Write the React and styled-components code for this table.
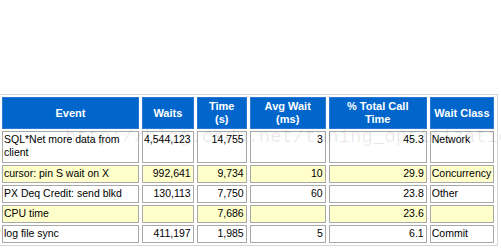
import styled, { createGlobalStyle } from "styled-components";

const GlobalStyle = createGlobalStyle`
  html, body {
    margin: 0;
    padding: 0;
    background: #ffffff;
    overflow: hidden;
  }
`;

const Page = styled.div`
  position: relative;
  width: 501px;
  height: 249px;
  padding-top: 94px;
  box-sizing: border-box;
  font-family: "Liberation Sans", Arial, sans-serif;
`;

const Table = styled.table`
  table-layout: fixed;
  border-collapse: separate;
  border-spacing: 3px 2px;
  border: 1px solid #d6d6d6;
  margin-left: -2px;
`;

const Th = styled.th`
  box-sizing: border-box;
  width: ${(p) => p.$w}px;
  height: 32px;
  padding: 1px 3px;
  background: #0066cc;
  border: 1px solid #2a78d2;
  color: #ffffff;
  font-size: 11px;
  font-weight: bold;
  line-height: 13px;
  text-align: center;
  vertical-align: middle;
`;

const Td = styled.td`
  box-sizing: border-box;
  height: ${(p) => (p.$tall ? 32 : 18)}px;
  padding: 1px 2px 2px 1px;
  background: ${(p) => (p.$alt ? "#ffffcc" : "#ffffff")};
  border: 1px solid #a8a8a8;
  color: #000000;
  font-size: 10.5px;
  line-height: 13px;
  text-align: ${(p) => (p.$num ? "right" : "left")};
  vertical-align: top;
  overflow: hidden;
`;

const Watermark = styled.div`
  position: absolute;
  left: 65px;
  top: 127px;
  font-family: "Liberation Mono", "Courier New", monospace;
  font-size: 19px;
  line-height: 20px;
  color: rgba(0, 0, 0, 0.09);
  white-space: nowrap;
  pointer-events: none;
`;

const columns = [
  { label: "Event", w: 137 },
  { label: "Waits", w: 51 },
  { label: ["Time", "(s)"], w: 50 },
  { label: ["Avg Wait", "(ms)"], w: 76 },
  { label: ["% Total Call", "Time"], w: 98 },
  { label: "Wait Class", w: 64 },
];

const rows = [
  { event: ["SQL*Net more data from", "client"], waits: "4,544,123", time: "14,755", avg: "3", pct: "45.3", cls: "Network" },
  { event: "cursor: pin S wait on X", waits: "992,641", time: "9,734", avg: "10", pct: "29.9", cls: "Concurrency" },
  { event: "PX Deq Credit: send blkd", waits: "130,113", time: "7,750", avg: "60", pct: "23.8", cls: "Other" },
  { event: "CPU time", waits: "", time: "7,686", avg: "", pct: "23.6", cls: "" },
  { event: "log file sync", waits: "411,197", time: "1,985", avg: "5", pct: "6.1", cls: "Commit" },
];

const lines = (v) =>
  Array.isArray(v) ? (
    <>
      {v[0]}
      <br />
      {v[1]}
    </>
  ) : (
    v
  );

export default function App() {
  return (
    <Page>
      <GlobalStyle />
      <Table>
        <thead>
          <tr>
            {columns.map((c, i) => (
              <Th key={i} $w={c.w}>
                {lines(c.label)}
              </Th>
            ))}
          </tr>
        </thead>
        <tbody>
          {rows.map((r, i) => {
            const alt = i % 2 === 1;
            const tall = Array.isArray(r.event);
            return (
              <tr key={i}>
                <Td $alt={alt} $tall={tall}>{lines(r.event)}</Td>
                <Td $alt={alt} $tall={tall} $num>{r.waits}</Td>
                <Td $alt={alt} $tall={tall} $num>{r.time}</Td>
                <Td $alt={alt} $tall={tall} $num>{r.avg}</Td>
                <Td $alt={alt} $tall={tall} $num>{r.pct}</Td>
                <Td $alt={alt} $tall={tall}>{r.cls}</Td>
              </tr>
            );
          })}
        </tbody>
      </Table>
      <Watermark>http://blog.csdn.net/tuning_optimization</Watermark>
    </Page>
  );
}
